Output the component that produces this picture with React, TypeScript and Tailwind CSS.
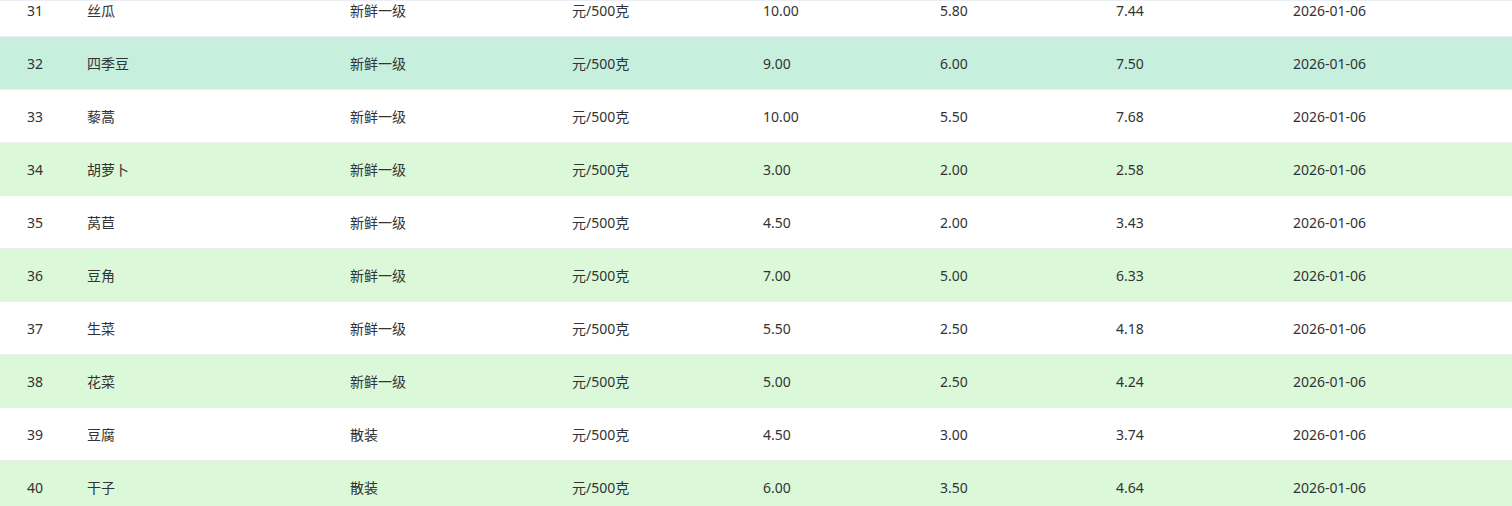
import React from "react";

type Row = {
  id: number;
  name: string;
  grade: string;
  high: string;
  low: string;
  avg: string;
};

const rows: Row[] = [
  { id: 31, name: "丝瓜", grade: "新鲜一级", high: "10.00", low: "5.80", avg: "7.44" },
  { id: 32, name: "四季豆", grade: "新鲜一级", high: "9.00", low: "6.00", avg: "7.50" },
  { id: 33, name: "藜蒿", grade: "新鲜一级", high: "10.00", low: "5.50", avg: "7.68" },
  { id: 34, name: "胡萝卜", grade: "新鲜一级", high: "3.00", low: "2.00", avg: "2.58" },
  { id: 35, name: "莴苣", grade: "新鲜一级", high: "4.50", low: "2.00", avg: "3.43" },
  { id: 36, name: "豆角", grade: "新鲜一级", high: "7.00", low: "5.00", avg: "6.33" },
  { id: 37, name: "生菜", grade: "新鲜一级", high: "5.50", low: "2.50", avg: "4.18" },
  { id: 38, name: "花菜", grade: "新鲜一级", high: "5.00", low: "2.50", avg: "4.24" },
  { id: 39, name: "豆腐", grade: "散装", high: "4.50", low: "3.00", avg: "3.74" },
  { id: 40, name: "干子", grade: "散装", high: "6.00", low: "3.50", avg: "4.64" },
];

const Cells = ({ row }: { row: Row }) => (
  <div className="flex items-center h-[52px]">
    <div className="w-[77px] pl-[27px]">{row.id}</div>
    <div className="w-[263px] pl-[10px]">{row.name}</div>
    <div className="w-[222px] pl-[10px]">{row.grade}</div>
    <div className="w-[191px] pl-[10px]">元/500克</div>
    <div className="w-[177px] pl-[10px]">{row.high}</div>
    <div className="w-[176px] pl-[10px]">{row.low}</div>
    <div className="w-[177px] pl-[10px]">{row.avg}</div>
    <div className="flex-1 pl-[10px]">2026-01-06</div>
  </div>
);

const App = () => {
  return (
    <div
      className="h-screen overflow-hidden bg-white text-[14px] text-[#333]"
      style={{ fontFamily: '"Noto Sans", "Noto Sans CJK SC", sans-serif' }}
    >
      <div className="h-px bg-[#ebeef5]" />
      {rows.map((row, i) => {
        const bg =
          row.id === 32
            ? "bg-[#c6efde]"
            : i % 2 === 1
            ? "bg-[#dbf9d9]"
            : "bg-white";
        if (i === 0) {
          return (
            <div key={row.id} className={`h-[36px] overflow-hidden border-b border-[#ebeef5] ${bg}`}>
              <div className="-mt-[17px]">
                <Cells row={row} />
              </div>
            </div>
          );
        }
        return (
          <div key={row.id} className={`border-b border-[#ebeef5] ${bg}`}>
            <Cells row={row} />
          </div>
        );
      })}
    </div>
  );
};

export default App;
